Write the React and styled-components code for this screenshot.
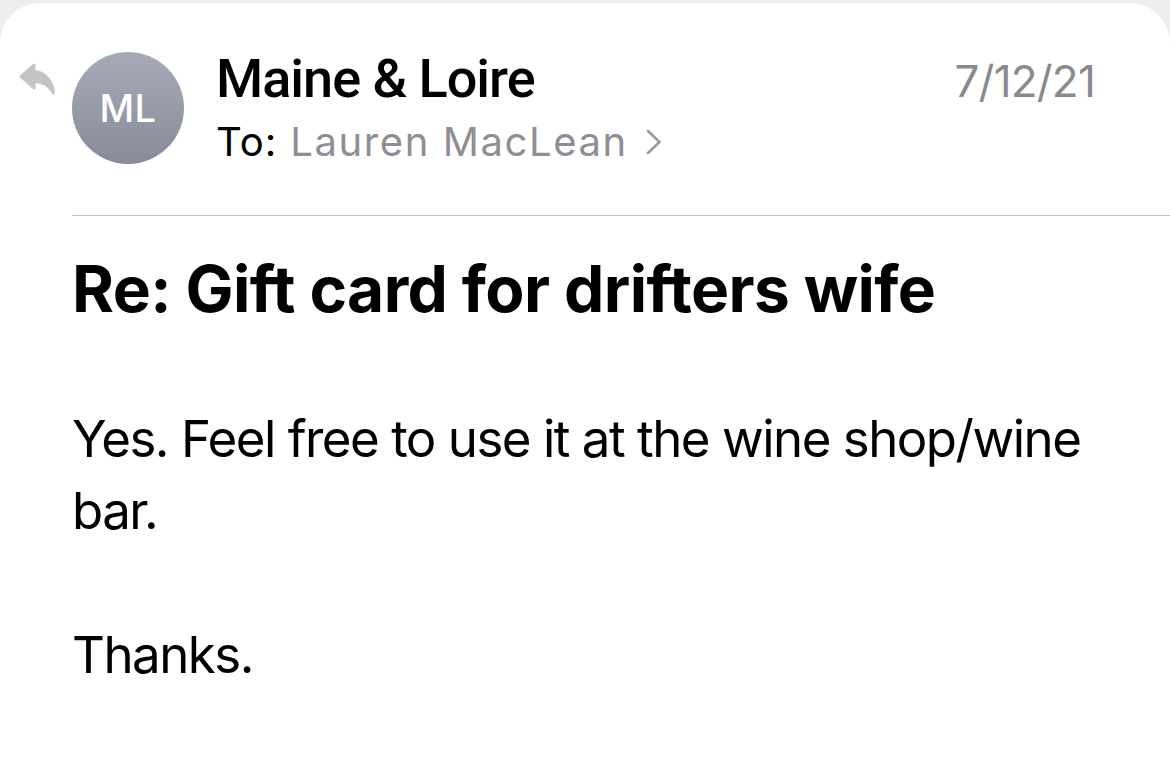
import React from 'react'
import styled, { createGlobalStyle } from 'styled-components'

const GlobalStyle = createGlobalStyle`
  html, body {
    margin: 0;
    padding: 0;
    background: #eeeef0;
  }
  body {
    font-family: Inter, "Liberation Sans", sans-serif;
    color: #000;
    -webkit-font-smoothing: antialiased;
  }
`

const Card = styled.div`
  margin: 3px 0 0;
  min-height: calc(100vh - 3px);
  background: #fff;
  border-radius: 40px 40px 0 0;
  box-sizing: border-box;
  padding-top: 49px;
  overflow: hidden;
`

const Header = styled.div`
  display: flex;
  align-items: flex-start;
  padding: 0 75px 0 18px;
`

const ReplyIcon = styled.div`
  width: 38px;
  height: 34px;
  margin-top: 10px;
  margin-right: 16px;
  color: #c4c4c6;

  svg {
    display: block;
  }
`

const Avatar = styled.div`
  width: 112px;
  height: 112px;
  border-radius: 50%;
  flex-shrink: 0;
  background: linear-gradient(180deg, #a7abb8 0%, #888b97 100%);
  display: flex;
  align-items: center;
  justify-content: center;
  color: #fff;
  font-family: Inter, sans-serif;
  font-weight: 500;
  font-size: 38px;
  letter-spacing: 0.5px;
`

const Info = styled.div`
  flex: 1;
  margin-left: 32px;
  min-width: 0;
`

const Sender = styled.div`
  font-family: Roboto, sans-serif;
  font-weight: 500;
  font-size: 54px;
  line-height: 54px;
  letter-spacing: -1px;
`

const Recipient = styled.div`
  display: flex;
  align-items: center;
  margin-top: 12px;
  font-size: 40px;
  line-height: 48px;
  letter-spacing: 1px;
`

const Label = styled.span`
  color: #000;
`

const Name = styled.span`
  color: #8e8e93;
  margin-left: 13px;
  letter-spacing: 1.6px;
`

const Chevron = styled.span`
  display: inline-flex;
  margin-left: 18px;
  color: #9a9a9e;

  svg {
    display: block;
  }
`

const DateText = styled.div`
  margin-top: 7px;
  font-size: 44px;
  line-height: 44px;
  letter-spacing: -0.8px;
  color: #8a8a8e;
`

const Divider = styled.div`
  height: 1px;
  background: #c3c3c5;
  margin: 49px 0 0 72px;
`

const Content = styled.div`
  padding: 0 75px 0 72px;
`

const Subject = styled.h1`
  margin: 35px 0 0;
  font-weight: 700;
  font-size: 64px;
  line-height: 76px;
  letter-spacing: -0.6px;
`

const Body = styled.div`
  margin-top: 76px;
`

const Paragraph = styled.p`
  margin: 0 0 72px;
  font-size: 51px;
  line-height: 72px;
  letter-spacing: -1.5px;
`

function ReplyArrow() {
  return (
    <svg width="38" height="34" viewBox="0 0 38 34">
      <path
        d="M16 3 L3 14.5 L16 26 L16 19.5 C25 19.5 31 23 35.5 31 C34.5 19 27 10 16 9.5 Z"
        fill="currentColor"
        stroke="currentColor"
        strokeWidth="3"
        strokeLinejoin="round"
      />
    </svg>
  )
}

function ChevronRight() {
  return (
    <svg width="16" height="26" viewBox="0 0 16 26">
      <path
        d="M2 2 L13.5 13 L2 24"
        fill="none"
        stroke="currentColor"
        strokeWidth="2.6"
        strokeLinecap="round"
        strokeLinejoin="round"
      />
    </svg>
  )
}

export default function App() {
  return (
    <>
      <GlobalStyle />
      <Card>
        <Header>
          <ReplyIcon>
            <ReplyArrow />
          </ReplyIcon>
          <Avatar>ML</Avatar>
          <Info>
            <Sender>Maine &amp; Loire</Sender>
            <Recipient>
              <Label>To:</Label>
              <Name>Lauren MacLean</Name>
              <Chevron>
                <ChevronRight />
              </Chevron>
            </Recipient>
          </Info>
          <DateText>7/12/21</DateText>
        </Header>
        <Divider />
        <Content>
          <Subject>Re: Gift card for drifters wife</Subject>
          <Body>
            <Paragraph>Yes. Feel free to use it at the wine shop/wine bar.</Paragraph>
            <Paragraph>Thanks.</Paragraph>
          </Body>
        </Content>
      </Card>
    </>
  )
}
